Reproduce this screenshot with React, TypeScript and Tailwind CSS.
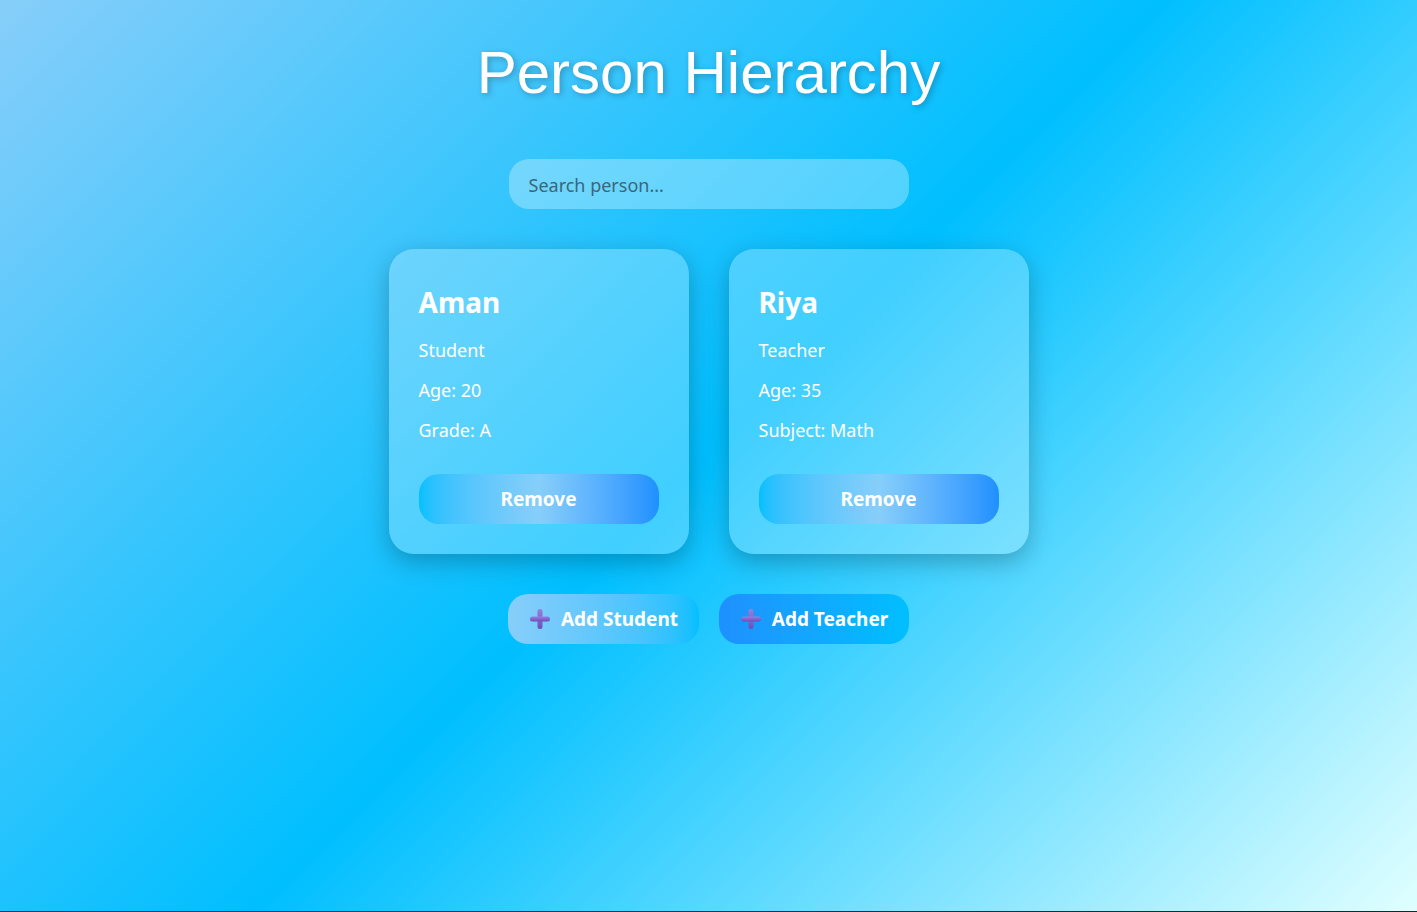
import { useState } from "react";

interface Person {
    id: number;
    name: string;
    role: "Student" | "Teacher";
    age: number;
    extra: string;
}

const initialPeople: Person[] = [
    { id: 1, name: "Aman", role: "Student", age: 20, extra: "Grade: A" },
    { id: 2, name: "Riya", role: "Teacher", age: 35, extra: "Subject: Math" },
];

function PlusIcon() {
    return (
        <svg width="22" height="22" viewBox="0 0 22 22" className="shrink-0">
            <defs>
                <linearGradient id="plusGrad" x1="0" y1="0" x2="0" y2="1">
                    <stop offset="0" stopColor="#9a7fe0" />
                    <stop offset="1" stopColor="#6a4fb8" />
                </linearGradient>
            </defs>
            <rect x="8.5" y="1" width="5" height="20" rx="2.5" fill="url(#plusGrad)" />
            <rect x="1" y="8.5" width="20" height="5" rx="2.5" fill="url(#plusGrad)" />
        </svg>
    );
}

function PersonCard(props: Readonly<{ person: Person; onRemove: (id: number) => void }>) {
    const { person } = props;
    return (
        <div className="w-[300px] rounded-[25px] bg-white/25 p-[30px] text-white shadow-[0_8px_25px_rgba(0,0,0,0.25)]">
            <h2 className="text-[28px] font-bold leading-[46px]">{person.name}</h2>
            <p className="mt-[13px] text-[18px] leading-[24px]">{person.role}</p>
            <p className="mt-[16px] text-[18px] leading-[24px]">Age: {person.age}</p>
            <p className="mt-[16px] text-[18px] leading-[24px]">{person.extra}</p>
            <button
                onClick={() => props.onRemove(person.id)}
                className="mt-[32px] h-[50px] w-full rounded-[20px] bg-gradient-to-r from-[#00bfff] via-[#87cefa] to-[#1e90ff] text-[19px] font-bold text-white"
            >
                Remove
            </button>
        </div>
    );
}

export default function App() {
    const [people, setPeople] = useState<Person[]>(initialPeople);
    const [query, setQuery] = useState("");

    const shown = people.filter((p) => p.name.toLowerCase().includes(query.toLowerCase()));

    return (
        <div className="font-['Segoe_UI','Noto_Sans',sans-serif]">
            <div className="flex h-[911px] flex-col items-center bg-[linear-gradient(135deg,#87cefa,#00bfff,#e0ffff)]">
                <h1 className="mt-[41px] font-['Liberation_Sans',Arial,sans-serif] text-[60px] leading-[64px] text-white [text-shadow:2px_2px_6px_rgba(0,0,0,0.25)]">
                    Person Hierarchy
                </h1>

                <input
                    value={query}
                    onChange={(e) => setQuery(e.target.value)}
                    placeholder="Search person..."
                    className="mt-[54px] h-[50px] w-[400px] rounded-[20px] bg-white/30 px-[20px] pt-[2px] text-[18px] text-[#2f5566] outline-none placeholder:text-[#3c6678]"
                />

                <div className="mt-[40px] flex gap-[40px]">
                    {shown.map((p) => (
                        <PersonCard key={p.id} person={p} onRemove={(id) => setPeople(people.filter((x) => x.id !== id))} />
                    ))}
                </div>

                <div className="mt-[40px] flex gap-[20px]">
                    <button className="flex h-[50px] w-[191px] items-center justify-center gap-[10px] rounded-[20px] bg-gradient-to-r from-[#87cefa] to-[#00bfff] text-[19px] font-bold text-white">
                        <PlusIcon />
                        Add Student
                    </button>
                    <button className="flex h-[50px] w-[190px] items-center justify-center gap-[10px] rounded-[20px] bg-gradient-to-r from-[#1e90ff] to-[#00bfff] text-[19px] font-bold text-white">
                        <PlusIcon />
                        Add Teacher
                    </button>
                </div>
            </div>
            <div className="h-px bg-[#1f2327]" />
        </div>
    );
}
